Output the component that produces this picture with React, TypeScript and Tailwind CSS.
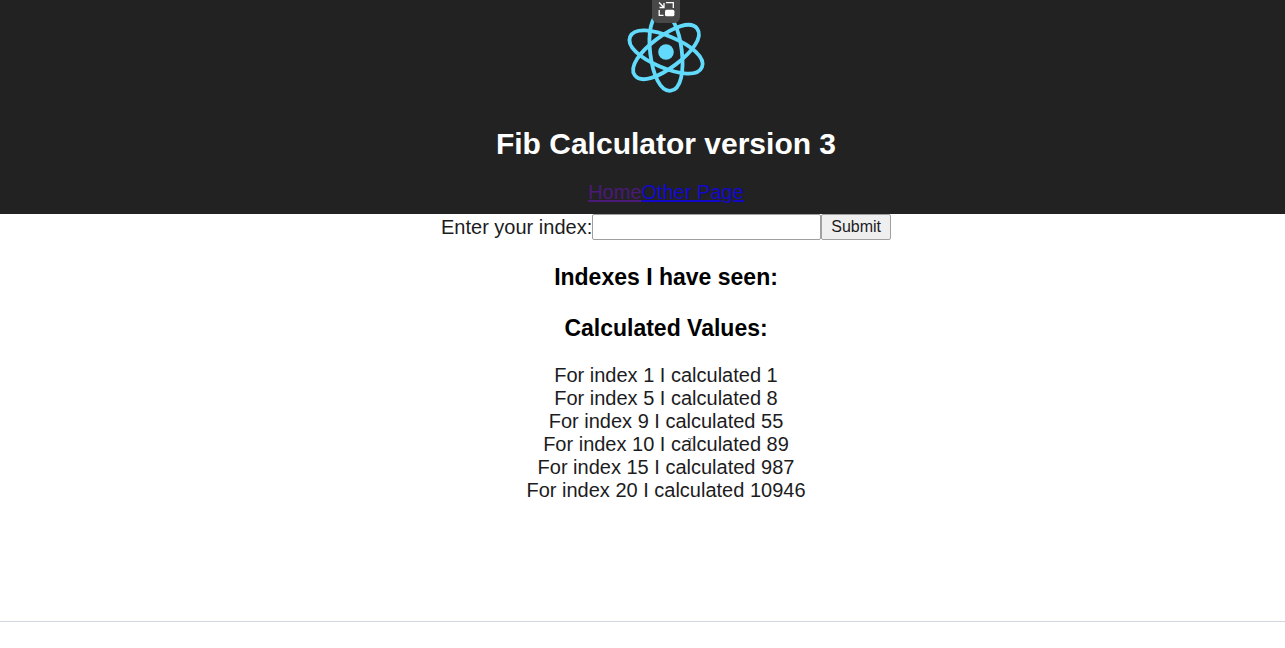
import { useState } from "react";

const values = [
  { index: 1, value: 1 },
  { index: 5, value: 8 },
  { index: 9, value: 55 },
  { index: 10, value: 89 },
  { index: 15, value: 987 },
  { index: 20, value: 10946 },
];

const orbit = "M-39 0C-39 -10.5 -21 -15.8 0 -15.8S39 -10.5 39 0S21 15.8 0 15.8S-39 10.5 -39 0Z";

function Logo() {
  return (
    <svg viewBox="-42 -42 84 84" className="size-[84px]" role="img" aria-label="React">
      <g fill="none" stroke="#61dafb" strokeWidth="3.8">
        <path d={orbit} transform="rotate(23)" />
        <path d={orbit} transform="rotate(83)" />
        <path d={orbit} transform="rotate(-37)" />
      </g>
      <circle r="7.8" fill="#61dafb" />
    </svg>
  );
}

function PictureInPictureButton() {
  return (
    <button
      type="button"
      aria-label="Picture in picture"
      className="absolute top-0 left-1/2 flex h-[23px] w-7 -translate-x-1/2 items-start justify-center rounded-b-md bg-[#484848] pt-px"
    >
      <svg viewBox="0 0 17 16" className="h-4 w-[17px]" fill="none" stroke="#fff" strokeWidth="1.3">
        <path d="M1 1.5L5.8 6.3M6 2V6.5H1.5" />
        <path d="M8 1.7H15.3V7M1.2 9V14.3H5.5" />
        <rect x="7" y="8.7" width="9.4" height="6.6" rx="1.5" fill="#fff" stroke="none" />
      </svg>
    </button>
  );
}

function TextCursor() {
  return (
    <svg viewBox="0 0 7 15" className="absolute top-1 left-[144px] h-[15px] w-[7px]" fill="none" stroke="#8a94a3" aria-hidden="true">
      <path d="M1 1.5H3L3.5 2L4 1.5H6M3.5 2V13M1 13.5H3L3.5 13L4 13.5H6" />
    </svg>
  );
}

function Header() {
  return (
    <header className="bg-[#222] pt-[10px] pb-[10px] pl-[47px] text-white">
      <div className="flex flex-col items-center">
        <Logo />
        <h1 className="mt-8 text-[30px] leading-9 font-bold">Fib Calculator version 3</h1>
        <nav className="mt-[19px] flex">
          <a href="#home" className="text-[#4b1a78] underline">Home</a>
          <a href="#other" className="text-[#1208cc] underline">Other Page</a>
        </nav>
      </div>
    </header>
  );
}

function Fib() {
  const [index, setIndex] = useState("");
  return (
    <main className="flex flex-col items-center pb-[119px] pl-[47px]">
      <form className="flex items-center" onSubmit={(e) => e.preventDefault()}>
        <label htmlFor="index">Enter your index:</label>
        <input
          id="index"
          value={index}
          onChange={(e) => setIndex(e.target.value)}
          className="h-[26px] w-[229px] rounded-xs border border-[#a0a0a0] bg-white px-1 text-base"
        />
        <button type="submit" className="h-[26px] rounded-xs border border-[#a0a0a0] bg-[#efefef] px-[9px] text-base leading-6">
          Submit
        </button>
      </form>
      <h3 className="mt-6 text-[23px] leading-[27px] font-bold text-black">Indexes I have seen:</h3>
      <h3 className="mt-6 mb-[22px] text-[23px] leading-[27px] font-bold text-black">Calculated Values:</h3>
      {values.map((v) => (
        <div key={v.index} className="relative">
          For index {v.index} I calculated {v.value}
          {v.index === 10 && <TextCursor />}
        </div>
      ))}
    </main>
  );
}

export default function App() {
  return (
    <div className="relative min-h-screen bg-white font-['Liberation_Sans',Arial,sans-serif] text-[20px] leading-[23px] text-[#1c1c1e]">
      <div className="border-b border-[#d0d7de]">
        <Header />
        <Fib />
      </div>
      <div className="absolute inset-x-0 top-0 pl-[47px]">
        <div className="relative">
          <PictureInPictureButton />
        </div>
      </div>
    </div>
  );
}
